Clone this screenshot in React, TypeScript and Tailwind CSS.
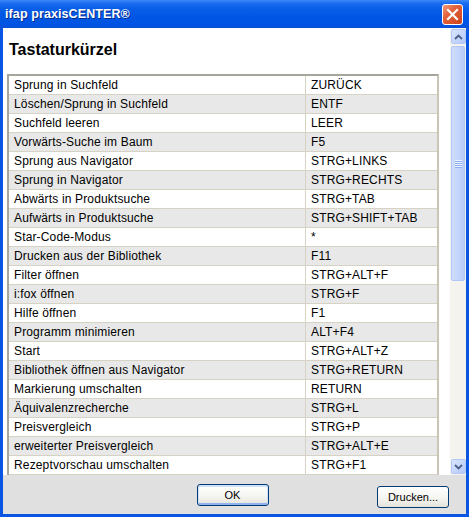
import React from "react";

const SHORTCUTS: [string, string][] = [
  ["Sprung in Suchfeld", "ZURÜCK"],
  ["Löschen/Sprung in Suchfeld", "ENTF"],
  ["Suchfeld leeren", "LEER"],
  ["Vorwärts-Suche im Baum", "F5"],
  ["Sprung aus Navigator", "STRG+LINKS"],
  ["Sprung in Navigator", "STRG+RECHTS"],
  ["Abwärts in Produktsuche", "STRG+TAB"],
  ["Aufwärts in Produktsuche", "STRG+SHIFT+TAB"],
  ["Star-Code-Modus", "*"],
  ["Drucken aus der Bibliothek", "F11"],
  ["Filter öffnen", "STRG+ALT+F"],
  ["i:fox öffnen", "STRG+F"],
  ["Hilfe öffnen", "F1"],
  ["Programm minimieren", "ALT+F4"],
  ["Start", "STRG+ALT+Z"],
  ["Bibliothek öffnen aus Navigator", "STRG+RETURN"],
  ["Markierung umschalten", "RETURN"],
  ["Äquivalenzrecherche", "STRG+L"],
  ["Preisvergleich", "STRG+P"],
  ["erweiterter Preisvergleich", "STRG+ALT+E"],
  ["Rezeptvorschau umschalten", "STRG+F1"],
];

function CloseButton() {
  return (
    <div className="w-[21px] h-[21px] rounded-[3px] border border-white bg-[linear-gradient(135deg,#f39a78_0%,#e2603a_40%,#cc4219_100%)] flex items-center justify-center">
      <svg width="13" height="13" viewBox="0 0 13 13" aria-hidden>
        <path d="M2 2 L11 11 M11 2 L2 11" stroke="white" strokeWidth="2.2" strokeLinecap="square" />
      </svg>
    </div>
  );
}

function ArrowButton({ dir }: { dir: "up" | "down" }) {
  return (
    <div className="w-[15px] h-[15px] rounded-[2px] border border-[#b4c8f5] bg-[linear-gradient(135deg,#dbe6fe_0%,#c4d5fc_55%,#b5c9f8_100%)] flex items-center justify-center">
      <svg width="9" height="6" viewBox="0 0 9 6" aria-hidden>
        <path
          d={dir === "up" ? "M1 5 L4.5 1.5 L8 5" : "M1 1 L4.5 4.5 L8 1"}
          stroke="#4d6185"
          strokeWidth="1.8"
          fill="none"
        />
      </svg>
    </div>
  );
}

function Scrollbar() {
  return (
    <div className="w-[17px] flex flex-col py-[1px] pl-[1px] pr-[1px] bg-[#f4f3ee] border-l border-white">
      <ArrowButton dir="up" />
      <div className="flex-1 flex flex-col pt-[2px]">
        <div className="h-[235px] rounded-[2px] border border-[#b2c6f3] bg-[linear-gradient(to_right,#cfdcfd_0%,#c4d5fc_50%,#b9cbf8_100%)] flex flex-col items-center justify-center gap-[1px]">
          {[0, 1, 2, 3].map((i) => (
            <div key={i} className="w-[7px] h-[1px] bg-[#eef3fe] shadow-[0_1px_0_#8eaef3]" />
          ))}
        </div>
      </div>
      <ArrowButton dir="down" />
    </div>
  );
}

function ShortcutTable() {
  return (
    <div className="mx-[4px] w-[432px] border-2 border-[#a7a69c] border-r-[#c9c6b8] flex flex-col">
      {SHORTCUTS.map(([action, keys], i) => (
        <div
          key={action}
          className={`flex h-[19px] border-b border-[#d6d2c4] ${i % 2 === 1 ? "bg-[#e8e8e8]" : "bg-white"}`}
        >
          <div className="w-[297px] border-r border-[#d6d2c4] pl-[5px] leading-[18px] truncate">{action}</div>
          <div className="flex-1 pl-[5px] leading-[18px]">{keys}</div>
        </div>
      ))}
    </div>
  );
}

function XpButton({ label, isDefault }: { label: string; isDefault?: boolean }) {
  return (
    <button
      type="button"
      className={`w-[72px] h-[22px] rounded-[3px] border border-[#003c74] bg-[linear-gradient(to_bottom,#ffffff_0%,#f5f5f1_55%,#e4e2da_100%)] text-[11px] text-black font-['Liberation_Sans',sans-serif] ${
        isDefault ? "shadow-[inset_0_1px_0_1px_#cfe1fd,inset_0_-1px_0_1px_#91b1f1]" : ""
      }`}
    >
      {label}
    </button>
  );
}

export default function App() {
  return (
    <div className="w-[469px] h-[517px] flex flex-col bg-[#0a55e2] overflow-hidden font-['Liberation_Sans',Arial,sans-serif]">
      {/* title bar */}
      <div className="h-[28px] shrink-0 flex items-center justify-between pl-[5px] pr-[6px] bg-[linear-gradient(to_bottom,#3d8af7_0%,#1a6cf0_12%,#0a5fe9_30%,#0056e4_60%,#0054e3_88%,#0a4fd6_100%)]">
        <span className="text-white font-bold text-[12.5px] tracking-[0.1px] [text-shadow:1px_1px_0_#0a2a8a]">
          ifap praxisCENTER®
        </span>
        <CloseButton />
      </div>

      <div className="flex-1 min-h-0 flex flex-col mx-[3px] mb-[3px]">
        {/* scrollable content */}
        <div className="flex-1 min-h-0 flex bg-white">
          <div className="flex-1 min-w-0 overflow-hidden text-black">
            <h1 className="pt-[13px] pl-[6px] text-[16px] leading-[18px] font-bold">Tastaturkürzel</h1>
            <div className="mt-[15px] text-[12px] tracking-[0.15px]">
              <ShortcutTable />
            </div>
          </div>
          <Scrollbar />
        </div>

        {/* button bar */}
        <div className="h-[39px] shrink-0 bg-[#e0e0e0] grid grid-cols-[1fr_auto_1fr] items-start pt-[9px] pr-[4px]">
          <div />
          <XpButton label="OK" isDefault />
          <div className="justify-self-end mr-[13px]">
            <XpButton label="Drucken..." />
          </div>
        </div>
      </div>
    </div>
  );
}
